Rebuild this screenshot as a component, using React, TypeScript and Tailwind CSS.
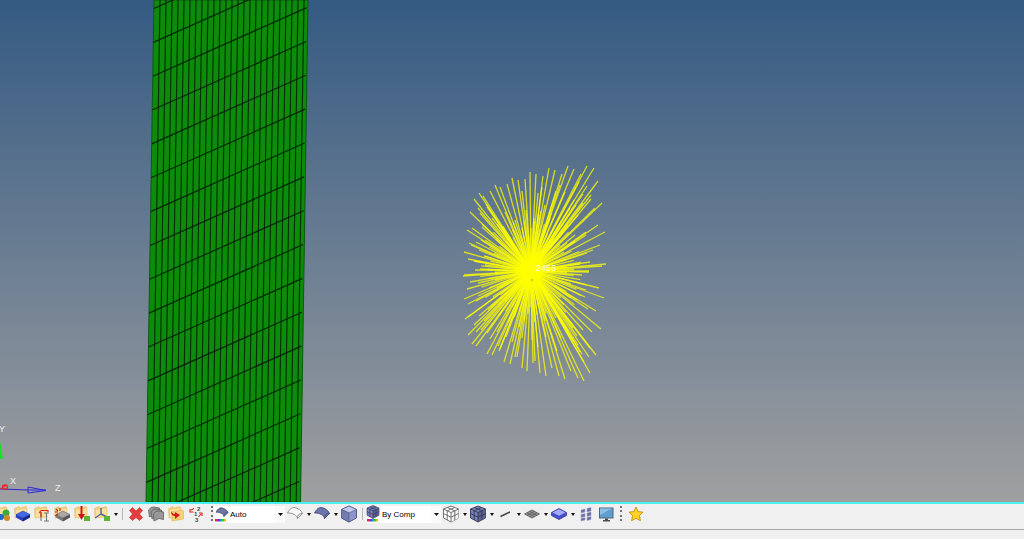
import type { ReactNode } from 'react'

const CENTER = [531, 271]

// Tips of the rigid element legs
const LEGS: [number, number][] = [
  [474, 199], [479, 193], [483, 196], [470, 212], [478, 208], [486, 204], [495, 185], [490, 191],
  [500, 187], [507, 184], [512, 178], [518, 180], [522, 191], [525, 179], [530, 172], [536, 174],
  [543, 176], [549, 168], [555, 170], [562, 174], [568, 166], [574, 169], [581, 174], [587, 166],
  [594, 168], [598, 181], [587, 186], [583, 194], [591, 195], [602, 203], [595, 208], [598, 225],
  [586, 232], [605, 232], [600, 245], [606, 264], [589, 271], [467, 230], [472, 228], [469, 243],
  [464, 252], [468, 259], [476, 242], [482, 224], [464, 275], [480, 269], [485, 265], [578, 215],
  [583, 203], [560, 185], [542, 187], [538, 193], [545, 205], [565, 192], [575, 235], [593, 250],
  [587, 253], [463, 276], [467, 289], [464, 299], [468, 304], [465, 319], [474, 325], [468, 335],
  [472, 344], [476, 346], [487, 354], [492, 355], [499, 351], [504, 362], [510, 364], [515, 357],
  [517, 357], [522, 368], [527, 371], [533, 363], [535, 361], [540, 373], [546, 376], [552, 368],
  [559, 376], [565, 379], [557, 351], [571, 371], [578, 378], [584, 381], [590, 373], [584, 362],
  [596, 355], [590, 348], [578, 345], [601, 329], [596, 311], [588, 309], [604, 298], [599, 288],
  [585, 297], [582, 275], [602, 266], [589, 272], [592, 332], [583, 330], [476, 332], [481, 330],
  [487, 333], [497, 332], [488, 310], [470, 282], [475, 270], [478, 283], [480, 213], [482, 227],
  [487, 207], [574, 200], [576, 205], [570, 208], [586, 235], [591, 199], [579, 182], [556, 191],
  [573, 328], [577, 336], [573, 341], [580, 352], [582, 354], [568, 331], [563, 323], [479, 316],
  [468, 317], [476, 301], [474, 261], [484, 256], [471, 245], [481, 240], [478, 296], [586, 290],
  [580, 264], [590, 262], [577, 300], [484, 321], [500, 349], [498, 346], [568, 225], [512, 342],
  [506, 337], [522, 338], [532, 340], [538, 347], [546, 337], [490, 339], [515, 220], [505, 212],
  [526, 210], [551, 214], [534, 218], [541, 211], [497, 224], [561, 338], [492, 218], [589, 357],
]

// Shorter legs to the inner nodes
const INNER: [number, number][] = Array.from({ length: 90 }, (_, i) => {
  const angle = (i * 4 + 2) * Math.PI / 180
  const length = 36 + (i * 7) % 22
  return [CENTER[0] + Math.cos(angle) * length, CENTER[1] + Math.sin(angle) * length]
})

function Spider() {
  const [cx, cy] = CENTER
  return (
    <g>
      {[...LEGS, ...INNER].map(([x, y], i) => (
        <line key={i} x1={cx} y1={cy} x2={x} y2={y} stroke="#ffff00" strokeWidth={1.300} strokeOpacity={0.75} />
      ))}
      <circle cx={cx} cy={cy} r={11} fill="#ffff00" />
      <circle cx={532} cy={280} r={1} fill="#ff9a2e" />
      <text x={536} y={271} fontSize={9} fill="#ffffff" fillOpacity={0.9}>2456</text>
    </g>
  )
}

function Mesh() {
  const columns = Array.from({ length: 25 }, (_, i) => 154 + (i + 1) * 6)
  const rows = Array.from({ length: 18 }, (_, i) => 8.5 + i * 33.85)
  return (
    <g>
      <clipPath id="strip">
        <path d="M154 0H308L300.5 502H146Z" />
      </clipPath>
      <path d="M154 0H308L300.5 502H146Z" fill="#0d8b0a" stroke="#0b5a14" />
      <g clipPath="url(#strip)">
        {columns.map(x => (
          <line key={x} x1={x} y1={0} x2={x - 7.8} y2={502} stroke="#012d01" strokeWidth={1.1} />
        ))}
        {rows.map(y => (
          <line key={y} x1={154 - y / 63} y1={y} x2={308 - y / 63} y2={y - 68.6} stroke="#022502" strokeWidth={1.2} />
        ))}
      </g>
    </g>
  )
}

function Axes() {
  return (
    <g fontSize={9} fill="#eeeeee">
      <path d="M0 441L3 459H0Z" fill="#14e32a" />
      <path d="M0 489L28 490" stroke="#2a2ad8" fill="none" />
      <path d="M28 487L46 490.500L28 493ZM28 490H46" stroke="#2a2ad8" fill="none" />
      <ellipse cx={5} cy={487} rx={2.500} ry={2} stroke="#f02828" strokeWidth={1.300} fill="none" />
      <path d="M0 489L7 485" stroke="#f02828" />
      <text x={-1} y={432}>Y</text>
      <text x={10} y={484}>X</text>
      <text x={55} y={491}>Z</text>
    </g>
  )
}

function Icon({ children }: { children: ReactNode }) {
  return (
    <svg viewBox="0 0 20 20" className="h-5 w-5 shrink-0" aria-hidden="true">
      {children}
    </svg>
  )
}

function Folder() {
  return (
    <g>
      <path d="M2.500 4.500L7 2.500L8.500 4L14 2.500L15 4V13L3 14Z" fill="#f2cd78" stroke="#e2b866" strokeWidth={0.5} />
      <path d="M4 6L14.500 4.500V12L4 13.500Z" fill="#fbe0a0" />
    </g>
  )
}

function Bars() {
  return (
    <g>
      <rect x={4} y={15} width={3} height={2.500} fill="#e5264b" />
      <rect x={7} y={15} width={2} height={2.500} fill="#7a2be0" />
      <rect x={9} y={15} width={2} height={2.500} fill="#1d9fd8" />
      <rect x={11} y={15} width={2} height={2.500} fill="#39c437" />
      <rect x={13} y={15} width={2} height={2.500} fill="#e3bb20" />
    </g>
  )
}

function Cube({ fill, dark, line }: { fill: string; dark: string; line: string }) {
  return (
    <g strokeLinejoin="round">
      <path d="M10 2L17.500 5V14L10 18L2.500 14V5Z" fill={fill} stroke={line} strokeWidth={0.9} />
      <path d="M10 8.500L17.500 5V14L10 18Z" fill={dark} />
      <path
        d="M2.500 5L10 8.500L17.500 5M10 8.500V18M6.300 3.500L13.800 6.800V16M13.700 3.500L6.200 6.800V16M2.500 9.500L10 13.200L17.500 9.500"
        fill="none"
        stroke={line}
        strokeWidth={0.9}
      />
    </g>
  )
}

function Surface({ fill, line }: { fill: string; line: string }) {
  return (
    <g stroke={line} strokeWidth={0.9} strokeLinejoin="round">
      <path d="M2.500 9C4.500 5 7 3.500 9 3.500C13 4 16.500 6.500 17.500 9.500L12.500 14.500C12 11 8 9 2.500 9Z" fill={fill} />
      <path d="M12.500 14.500C12.500 11 14 9.500 17.500 9.500" fill="none" />
    </g>
  )
}

function Block({ top, left, right }: { top: string; left: string; right: string }) {
  return (
    <g>
      <path d="M3 9.500L10 6L17 9.500L10 13Z" fill={top} stroke={right} strokeWidth={0.5} />
      <path d="M3 9.500L10 13V16.500L3 12.500Z" fill={left} />
      <path d="M17 9.500L10 13V16.500L17 12.500Z" fill={right} />
    </g>
  )
}

function Tool({ label, children }: { label: string; children: ReactNode }) {
  return (
    <button type="button" aria-label={label} className="h-5 w-5 shrink-0 hover:bg-sky-100">
      <Icon>{children}</Icon>
    </button>
  )
}

function Caret({ label }: { label: string }) {
  return (
    <button type="button" aria-label={label} className="flex h-5 w-[7px] shrink-0 items-center justify-center hover:bg-sky-100">
      <svg viewBox="0 0 4 3" className="h-[3px] w-1" aria-hidden="true">
        <path d="M0 0H4L2 3Z" fill="#111111" />
      </svg>
    </button>
  )
}

function Split({ label, children }: { label: string; children: ReactNode }) {
  return (
    <div className="flex shrink-0">
      <Tool label={label}>{children}</Tool>
      <Caret label={`${label} options`} />
    </div>
  )
}

function Dots() {
  return (
    <svg viewBox="0 0 2 16" className="h-4 w-[2px] shrink-0" aria-hidden="true">
      <path d="M0 1H2M0 5H2M0 10H2M0 14H2" stroke="#4a4a4a" strokeWidth={1.500} />
    </svg>
  )
}

function Separator() {
  return <div className="h-3 w-px shrink-0 bg-[#b4b4b4]" />
}

function Picker({ label, value, options, icon }: { label: string; value: string; options: string[]; icon: ReactNode }) {
  return (
    <div className="relative flex h-[17px] shrink-0 items-center bg-white">
      <div className="pointer-events-none absolute -left-[3px]">
        <Icon>{icon}</Icon>
      </div>
      <select
        aria-label={label}
        defaultValue={value}
        className="h-full w-full appearance-none bg-transparent pr-3 pl-4 text-[8px] leading-[17px] text-black outline-none"
      >
        {options.map(o => <option key={o}>{o}</option>)}
      </select>
      <div className="pointer-events-none absolute right-0 flex h-full w-[10px] items-center justify-center bg-[#fafafa]">
        <svg viewBox="0 0 5 3" className="h-[3px] w-[5px]" aria-hidden="true">
          <path d="M0 0H5L2.500 3Z" fill="#111111" />
        </svg>
      </div>
    </div>
  )
}

export default function App() {
  return (
    <div className="flex h-screen flex-col overflow-hidden bg-[#f0f0f0] font-['Liberation_Sans',Arial,sans-serif]">
      {/* Viewport */}
      <main className="min-h-0 flex-1 bg-linear-to-b from-[#345a82] to-[#a0a0a0]">
        <svg viewBox="0 0 1024 502" preserveAspectRatio="xMinYMin slice" className="h-full w-full" role="img" aria-label="Model view">
          <Mesh />
          <Spider />
          <Axes />
        </svg>
      </main>

      {/* Toolbar */}
      <div role="toolbar" aria-label="Visualization" className="flex h-7 shrink-0 items-center overflow-hidden border-t-2 border-b border-t-[#4deeee] border-b-[#a8a8a8] pb-[5px]">
        <div className="-ml-2 flex shrink-0">
          <Tool label="Assemblies">
            <Folder />
            <circle cx={14} cy={9} r={3.500} fill="#39ad35" />
            <circle cx={9} cy={13} r={3} fill="#2566c9" />
            <circle cx={15} cy={14} r={3} fill="#cf8a2a" />
          </Tool>
          <Tool label="Components">
            <Folder />
            <g transform="translate(1 1)"><Block top="#4169ee" left="#2340c4" right="#16298e" /></g>
          </Tool>
          <Tool label="Properties">
            <Folder />
            <path d="M9 8V17M12 9H17M12 17H17M14.500 9V17" stroke="#777777" strokeWidth={1.100} fill="none" />
            <path d="M7 9L9 6.500H16V8M9 8V13" stroke="#dc2018" strokeWidth={1.100} fill="none" />
          </Tool>
          <Tool label="Materials">
            <Folder />
            <g transform="translate(1 1)"><Block top="#a8a8a8" left="#777777" right="#555555" /></g>
            <path d="M3 8H6M4 5L6 7M8 4V7M3 12L6 10" stroke="#b63a1b" strokeWidth={1.200} />
          </Tool>
          <Tool label="Load collectors">
            <Folder />
            <path d="M9.500 2V11" stroke="#cc1515" strokeWidth={2} />
            <path d="M6 10H13L9.500 16Z" fill="#cc1515" />
            <rect x={12} y={12} width={6} height={5} fill="#5fb233" />
          </Tool>
          <Split label="Systems">
            <Folder />
            <path d="M9 4V10L3 14M9 10L15 13" stroke="#50649c" strokeWidth={1.400} fill="none" />
            <rect x={12} y={12} width={6} height={5} fill="#5fb233" />
          </Split>
        </div>
        <div className="flex w-[7px] shrink-0 justify-center"><Separator /></div>
        <div className="flex shrink-0">
          <Tool label="Delete">
            <path d="M6.500 3.500L10 7L13.500 3.500L16.500 6.500L13.500 10L16.500 13.500L13.500 16.500L10 13.500L6.500 16.500L3.500 13.500L6.500 10L3.500 6.500Z" fill="#e23c3c" stroke="#c92c30" strokeWidth={0.6} strokeLinejoin="round" />
          </Tool>
          <Tool label="Card edit">
            <g fill="#989898" stroke="#606060" strokeWidth={0.8} strokeLinejoin="round">
              <path d="M2.500 6Q5 2.500 8 3L13.500 4V12L8 10.500L3.500 13Z" />
              <path d="M5 8Q7 4.500 10 5L15.500 6V14L10.500 12.500L6 15Z" />
              <path d="M7.500 10Q9.500 6.500 12 7L17.500 8V15.500L13 14.500L8 17Z" />
            </g>
          </Tool>
          <Tool label="Organize">
            <Folder />
            <path d="M6 8L16 6L17.500 7V15L6 17Z" fill="#f8d27a" stroke="#e3b050" strokeWidth={0.6} />
            <path d="M5 7C5 11 7 12 9 12V15L14 11L9 8V10C7 10 6 9 5 7Z" fill="#d91a1a" />
          </Tool>
          <Tool label="Renumber">
            <g fontSize={6} fontWeight={700} fill="#444444">
              <text x={11} y={7}>2</text>
              <text x={8} y={12}>1</text>
              <text x={9} y={18}>3</text>
            </g>
            <path d="M8 4.500L5 6M4 5V8H7.500M12.500 13L15 10M13 9H16V12" stroke="#db2525" strokeWidth={1.100} fill="none" />
          </Tool>
        </div>
        <div className="flex w-2 shrink-0 justify-end pr-px"><Dots /></div>
        <div className="grid w-[71px] shrink-0">
          <Picker
            label="Element color mode"
            value="Auto"
            options={['Auto', 'By Comp', 'By Prop', 'By Mat']}
            icon={
              <>
                <g transform="translate(3 1) scale(0.8)"><Surface fill="#6f759f" line="#454a78" /></g>
                <Bars />
              </>
            }
          />
        </div>
        <div className="flex shrink-0">
          <Split label="Geometry wireframe"><Surface fill="#f8f8f8" line="#888888" /></Split>
          <Split label="Geometry shaded"><Surface fill="#6c74ad" line="#464b75" /></Split>
          <Tool label="Transparency">
            <path d="M10 2L17.500 5.500V14L10 18L2.500 14V5.500Z" fill="#8c94cb" stroke="#555d8c" />
            <path d="M2.500 5.500L10 9L17.500 5.500L10 2Z" fill="#c2c8eb" stroke="#555d8c" strokeWidth={0.7} />
            <path d="M10 9V18L2.500 14V5.500Z" fill="#747cae" stroke="#555d8c" strokeWidth={0.7} />
          </Tool>
        </div>
        <div className="flex w-[7px] shrink-0 justify-center"><Separator /></div>
        <div className="grid w-[75px] shrink-0">
          <Picker
            label="Element coloring"
            value="By Comp"
            options={['By Comp', 'By Prop', 'By Mat', 'By Assem']}
            icon={
              <>
                <g transform="translate(2 0) scale(0.8)"><Cube fill="#7a81b7" dark="#5a608f" line="#383d62" /></g>
                <Bars />
              </>
            }
          />
        </div>
        <div className="flex shrink-0">
          <Split label="Wireframe elements"><Cube fill="#ffffff" dark="#f2f2f2" line="#666666" /></Split>
          <Split label="Shaded elements"><Cube fill="#7880b5" dark="#5c628f" line="#343957" /></Split>
          <Split label="1D elements"><path d="M5.500 12.500L15 8" stroke="#444444" strokeWidth={1.500} /></Split>
          <Split label="2D elements">
            <path d="M2.500 10L10 6L17.500 10L10 14Z" fill="#999999" stroke="#555555" strokeWidth={0.8} />
            <path d="M5 8.700L12.500 12.700M7.500 7.300L15 11.300M5 11.300L12.500 7.300M7.500 12.700L15 8.700" stroke="#555555" strokeWidth={0.7} />
          </Split>
          <Split label="3D elements">
            <path d="M2.500 8.500L10 4.500L17.500 8.500V11.500L10 15.500L2.500 11.500Z" fill="#4650cf" stroke="#33398f" strokeWidth={0.8} strokeLinejoin="round" />
            <path d="M3.500 8.500L10 5.200L16.500 8.500L10 11.800Z" fill="#a4abff" />
          </Split>
          <Tool label="Shrink elements">
            <g fill="#686e9d" stroke="#9da2c5" strokeWidth={0.5}>
              <path d="M5 6L9 5V8L5 9ZM11 4.500L15 3.500V7L11 8ZM5 10.500L9 9.500V12.500L5 13.500ZM11 9L15 8V11.500L11 12.500ZM5 14.500L9 13.500V16L5 17ZM11 13.500L15 12.500V15.500L11 16.500Z" />
            </g>
          </Tool>
          <Tool label="Visualization options">
            <rect x={3.500} y={4} width={13.500} height={10} fill="#5f9ece" stroke="#50657a" />
            <path d="M4 4.500H16L4 11Z" fill="#8cc0e3" />
            <path d="M9 14.500H12V16H14V17.500H7V16H9Z" fill="#4b4b4b" />
          </Tool>
        </div>
        <div className="flex w-[10px] shrink-0 justify-center"><Dots /></div>
        <Tool label="Favorites">
          <path d="M10 3L12.100 7.600L17 8.200L13.400 11.600L14.400 16.700L10 14.200L5.600 16.700L6.600 11.600L3 8.200L7.900 7.600Z" fill="#ffd323" stroke="#cc9612" strokeWidth={1} strokeLinejoin="round" />
        </Tool>
      </div>

      {/* Status bar */}
      <footer className="h-[9px] shrink-0 bg-[#f0f0f0]" />
    </div>
  )
}
